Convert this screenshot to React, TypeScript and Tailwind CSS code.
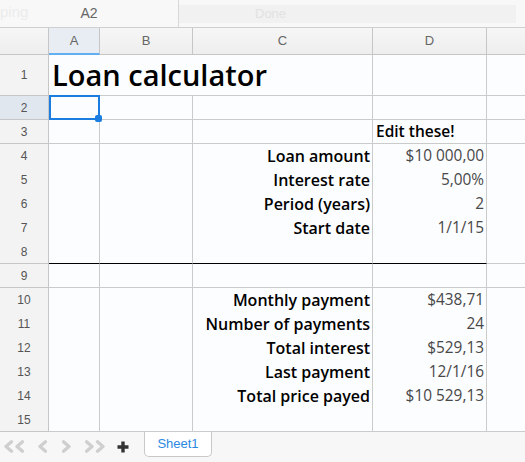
import React from "react";

const cellFont = { fontFamily: '"Open Sans", "Noto Sans", sans-serif' };
const uiFont = { fontFamily: '"Liberation Sans", Arial, sans-serif' };

type Row = {
  n: number;
  label?: string;
  value?: string;
  edit?: boolean;
  hl?: boolean;
  thick?: boolean;
};

const rows: Row[] = [
  { n: 3, edit: true },
  { n: 4, label: "Loan amount", value: "$10 000,00" },
  { n: 5, label: "Interest rate", value: "5,00%" },
  { n: 6, label: "Period (years)", value: "2" },
  { n: 7, label: "Start date", value: "1/1/15" },
  { n: 8, thick: true },
  { n: 9 },
  { n: 10, label: "Monthly payment", value: "$438,71", hl: true },
  { n: 11, label: "Number of payments", value: "24", hl: true },
  { n: 12, label: "Total interest", value: "$529,13", hl: true },
  { n: 13, label: "Last payment", value: "12/1/16", hl: true },
  { n: 14, label: "Total price payed", value: "$10 529,13", hl: true },
  { n: 15 },
];

const grid = "grid grid-cols-[49px_51px_93px_180px_114px_1fr]";
const cell = "border-r border-b border-[#cbcbcb] bg-[#fcfdff]";

function RowHead({ n, sel }: { n: number; sel?: boolean }) {
  return (
    <div
      className={`flex items-center justify-center border-r border-b border-[#c6c6c6] text-[12px] text-[#555] ${
        sel ? "bg-[#e1e7ef]" : "bg-[#f3f3f3]"
      }`}
      style={uiFont}
    >
      {n}
    </div>
  );
}

function Chev({ dir, double }: { dir: "l" | "r"; double?: boolean }) {
  const w = double ? 20 : 9;
  const one = (ox: number) =>
    dir === "l"
      ? `${ox + 7.5},1.8 ${ox + 2},6.5 ${ox + 7.5},11.2`
      : `${ox + 1.5},1.8 ${ox + 7},6.5 ${ox + 1.5},11.2`;
  return (
    <svg width={w} height={13} viewBox={`0 0 ${w} 13`} className="shrink-0">
      <polyline points={one(0)} fill="none" stroke="#cfcfcf" strokeWidth={3.3} strokeLinejoin="round" strokeLinecap="round" />
      {double && (
        <polyline points={one(11)} fill="none" stroke="#cfcfcf" strokeWidth={3.3} strokeLinejoin="round" strokeLinecap="round" />
      )}
    </svg>
  );
}

export default function App() {
  return (
    <div className="w-[525px] h-[462px] overflow-hidden bg-[#f8f8f8] select-none">
      {/* formula bar */}
      <div className="flex h-[28px] border-b border-[#cfcfcf] bg-[#f8f8f8]">
        <div className="relative w-[179px] border-r border-[#d8d8d8] flex items-center justify-center text-[14px] text-[#666]" style={uiFont}>
          <span className="absolute left-0 top-[1px] text-[15px] text-[#ececec]">ping</span>
          <span className="relative">A2</span>
        </div>
        <div className="flex-1 flex items-start pt-[5px] pr-[9px]">
          <div className="h-[18px] w-full bg-[#f1f1f1] text-[13px] text-[#e2e2e2] pl-[76px] leading-[18px]" style={uiFont}>
            Done
          </div>
        </div>
      </div>

      {/* column headers */}
      <div className={`${grid} h-[27px]`} style={uiFont}>
        <div className="border-r border-b border-[#c6c6c6] bg-gradient-to-b from-[#f6f6f6] to-[#eeeeee]" />
        <div className="flex items-center justify-center border-r border-b-2 border-r-[#c6c6c6] border-b-[#62aef2] bg-[#e8edf3] text-[13px] text-[#666] pt-[1px]">A</div>
        <div className="flex items-center justify-center border-r border-b border-[#c6c6c6] bg-gradient-to-b from-[#f6f6f6] to-[#eeeeee] text-[13px] text-[#666]">B</div>
        <div className="flex items-center justify-center border-r border-b border-[#c6c6c6] bg-gradient-to-b from-[#f6f6f6] to-[#eeeeee] text-[13px] text-[#666]">C</div>
        <div className="flex items-center justify-center border-r border-b border-[#c6c6c6] bg-gradient-to-b from-[#f6f6f6] to-[#eeeeee] text-[13px] text-[#666]">D</div>
        <div className="border-b border-[#c6c6c6] bg-gradient-to-b from-[#f6f6f6] to-[#eeeeee]" />
      </div>

      {/* row 1 */}
      <div className={`${grid} h-[41px]`} style={cellFont}>
        <RowHead n={1} />
        <div className={`col-span-3 ${cell} flex items-end pl-[3px] pb-[1px] text-[29px] font-semibold text-black leading-[38px] whitespace-nowrap`}>
          Loan calculator
        </div>
        <div className={cell} />
        <div className={`${cell} border-r-0`} />
      </div>

      {/* row 2 */}
      <div className={`${grid} h-[24px]`} style={cellFont}>
        <RowHead n={2} sel />
        <div className="relative border-r border-b border-[#cbcbcb] bg-[#fcfdff]">
          <div className="absolute left-0 top-[-1px] w-[51px] h-[25px] border-2 border-[#1b7de0]" />
          <div className="absolute left-[46px] top-[19px] w-[7px] h-[7px] rounded-[2px] bg-[#1b7de0]" />
        </div>
        <div className={cell} />
        <div className={cell} />
        <div className={cell} />
        <div className={`${cell} border-r-0`} />
      </div>

      {rows.map((r) => {
        const b = r.thick ? "border-b-black" : "";
        return (
          <div key={r.n} className={`${grid} h-[24px]`} style={cellFont}>
            <RowHead n={r.n} />
            <div className={`${cell} ${b}`} />
            <div className={`${cell} ${b}`} />
            <div className={`${cell} ${b} flex items-center justify-end pr-[2px] text-[16px] font-semibold text-black whitespace-nowrap`}>
              {r.label}
            </div>
            <div
              className={`${cell} ${b} flex items-center ${
                r.edit
                  ? "justify-start pl-[3px] font-semibold text-black text-[15.5px]"
                  : "justify-end pr-[2px] text-[#484848] text-[15.4px]"
              } whitespace-nowrap ${r.hl ? "bg-[#dae3ee]" : ""}`}
            >
              {r.edit ? "Edit these!" : r.value}
            </div>
            <div className={`${cell} border-r-0`} />
          </div>
        );
      })}

      {/* sheet tabs */}
      <div className="flex items-start h-[31px] bg-[#f7f7f7]" style={uiFont}>
        <div className="flex items-center h-[29px] pl-[4px]">
          <Chev dir="l" double />
          <div className="ml-[14px]"><Chev dir="l" /></div>
          <div className="ml-[15px]"><Chev dir="r" /></div>
          <div className="ml-[14px]"><Chev dir="r" double /></div>
          <svg width={12} height={12} viewBox="0 0 12 12" className="ml-[12px] shrink-0">
            <path d="M6 0.5V11.5M0.5 6H11.5" stroke="#333" strokeWidth={3.4} />
          </svg>
        </div>
        <div className="ml-[15px] w-[68px] h-[25px] border border-t-0 border-[#c8c8c8] rounded-b-[5px] bg-white flex items-center justify-center text-[13px] text-[#2b88df]">
          Sheet1
        </div>
      </div>
    </div>
  );
}
